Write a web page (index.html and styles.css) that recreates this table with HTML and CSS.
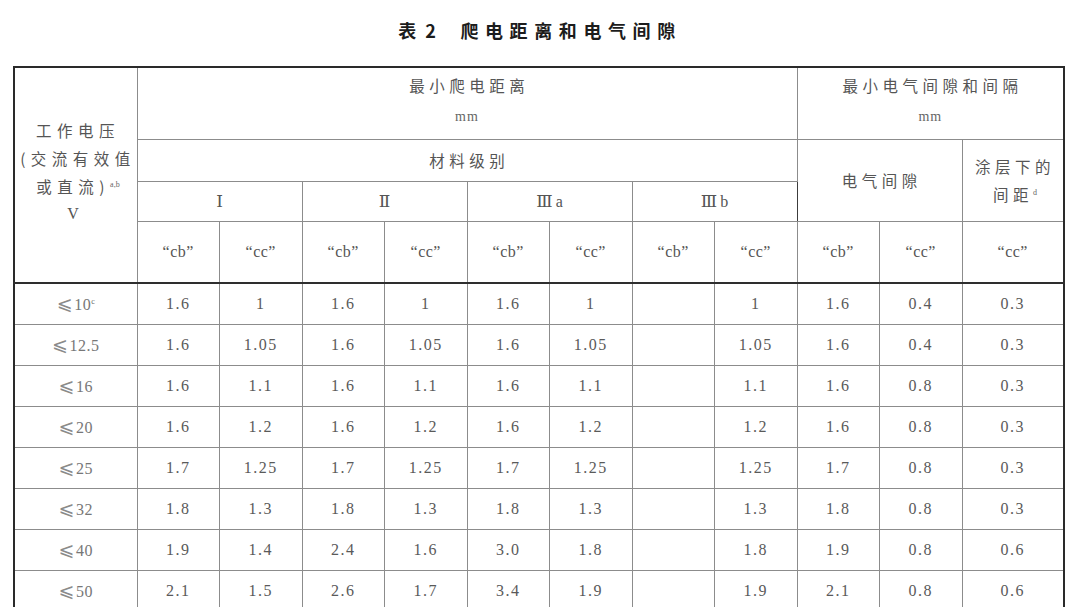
FILE: index.html
```html
<!DOCTYPE html>
<html lang="zh-CN">
<head>
<meta charset="utf-8">
<title>表 2 爬电距离和电气间隙</title>
<link rel="stylesheet" href="styles.css">
</head>
<body>
<div class="page">
  <h1 class="title"><span class="t1">表 2</span><span class="t2">爬电距离和电气间隙</span></h1>
  <table class="tbl">
    <colgroup>
      <col class="c-v">
      <col class="c-n"><col class="c-n"><col class="c-n"><col class="c-n"><col class="c-n">
      <col class="c-n"><col class="c-n"><col class="c-n"><col class="c-n"><col class="c-n">
      <col class="c-w">
    </colgroup>
    <thead>
      <tr class="r1">
        <th rowspan="4" class="volt">
          <div class="cn vl">工作电压</div>
          <div class="cn vl">(交流有效值</div>
          <div class="cn vl">或直流)<sup>a,b</sup></div>
          <div class="lat vl">V</div>
        </th>
        <th colspan="8"><div class="cn">最小爬电距离</div><div class="unit">mm</div></th>
        <th colspan="3" class="dk"><div class="cn">最小电气间隙和间隔</div><div class="unit">mm</div></th>
      </tr>
      <tr class="r2">
        <th colspan="8"><span class="cn">材料级别</span></th>
        <th colspan="2" rowspan="2" class="dk"><span class="cn">电气间隙</span></th>
        <th rowspan="2"><div class="cn">涂层下的</div><div class="cn">间距<sup>d</sup></div></th>
      </tr>
      <tr class="r3">
        <th colspan="2" class="rom">Ⅰ</th>
        <th colspan="2" class="rom">Ⅱ</th>
        <th colspan="2" class="rom">Ⅲ<span class="ab">a</span></th>
        <th colspan="2" class="rom">Ⅲ<span class="ab">b</span></th>
      </tr>
      <tr class="r4">
        <th class="q">“cb”</th><th class="q">“cc”</th>
        <th class="q">“cb”</th><th class="q">“cc”</th>
        <th class="q">“cb”</th><th class="q">“cc”</th>
        <th class="q">“cb”</th><th class="q">“cc”</th>
        <th class="q dk">“cb”</th><th class="q">“cc”</th>
        <th class="q">“cc”</th>
      </tr>
    </thead>
    <tbody>
      <tr><td class="v"><span class="le">⩽</span>10<sup>c</sup></td><td>1.6</td><td>1</td><td>1.6</td><td>1</td><td>1.6</td><td>1</td><td></td><td>1</td><td class="dk">1.6</td><td>0.4</td><td>0.3</td></tr>
      <tr><td class="v"><span class="le">⩽</span>12.5</td><td>1.6</td><td>1.05</td><td>1.6</td><td>1.05</td><td>1.6</td><td>1.05</td><td></td><td>1.05</td><td class="dk">1.6</td><td>0.4</td><td>0.3</td></tr>
      <tr><td class="v"><span class="le">⩽</span>16</td><td>1.6</td><td>1.1</td><td>1.6</td><td>1.1</td><td>1.6</td><td>1.1</td><td></td><td>1.1</td><td class="dk">1.6</td><td>0.8</td><td>0.3</td></tr>
      <tr><td class="v"><span class="le">⩽</span>20</td><td>1.6</td><td>1.2</td><td>1.6</td><td>1.2</td><td>1.6</td><td>1.2</td><td></td><td>1.2</td><td class="dk">1.6</td><td>0.8</td><td>0.3</td></tr>
      <tr><td class="v"><span class="le">⩽</span>25</td><td>1.7</td><td>1.25</td><td>1.7</td><td>1.25</td><td>1.7</td><td>1.25</td><td></td><td>1.25</td><td class="dk">1.7</td><td>0.8</td><td>0.3</td></tr>
      <tr><td class="v"><span class="le">⩽</span>32</td><td>1.8</td><td>1.3</td><td>1.8</td><td>1.3</td><td>1.8</td><td>1.3</td><td></td><td>1.3</td><td class="dk">1.8</td><td>0.8</td><td>0.3</td></tr>
      <tr><td class="v"><span class="le">⩽</span>40</td><td>1.9</td><td>1.4</td><td>2.4</td><td>1.6</td><td>3.0</td><td>1.8</td><td></td><td>1.8</td><td class="dk">1.9</td><td>0.8</td><td>0.6</td></tr>
      <tr><td class="v"><span class="le">⩽</span>50</td><td>2.1</td><td>1.5</td><td>2.6</td><td>1.7</td><td>3.4</td><td>1.9</td><td></td><td>1.9</td><td class="dk">2.1</td><td>0.8</td><td>0.6</td></tr>
    </tbody>
  </table>
</div>
</body>
</html>
```

FILE: styles.css
```css
html, body {
  margin: 0;
  padding: 0;
  background: #ffffff;
}

body {
  font-family: "Noto Sans CJK SC", "DejaVu Sans", sans-serif;
  color: #555555;
}

.page {
  padding-left: 13px;
  width: 1052px;
}

.title {
  margin: 0;
  height: 66px;
  box-sizing: border-box;
  padding-top: 18px;
  padding-left: 2px;
  display: flex;
  justify-content: center;
  align-items: flex-start;
  font-size: 18px;
  line-height: 24px;
  font-weight: 700;
  color: #1c1c1c;
}

.t1 {
  letter-spacing: 2.5px;
}

.t2 {
  margin-left: 22px;
  letter-spacing: 6.6px;
}

.tbl {
  border-collapse: collapse;
  table-layout: fixed;
  width: 1052px;
  border-top: 2px solid #2a2a2a;
  border-left: 2px solid #2a2a2a;
  border-right: 2px solid #2a2a2a;
}

.c-v { width: 123px; }
.c-n { width: 82.5px; }
.c-w { width: 102px; }

.tbl th,
.tbl td {
  border: 1px solid #8c8c8c;
  padding: 0;
  text-align: center;
  vertical-align: middle;
  font-weight: 400;
  color: #555555;
}

.tbl .dk {
  border-left: 1px solid #3c3c3c;
}

.r1 { height: 72px; }
.r2 { height: 42px; }
.r3 { height: 40px; }
.r4 { height: 62px; }

.r1 .unit {
  line-height: 36px;
}

.r4 th {
  border-bottom: 2px solid #2e2e2e;
}

.tbl .volt {
  border-bottom: 2px solid #2e2e2e;
  vertical-align: middle;
  padding-bottom: 6px;
}

.cn {
  font-size: 15.5px;
  letter-spacing: 4.5px;
  margin-right: -4.5px;
  line-height: 28px;
}

.vl {
  line-height: 28px;
  text-align: center;
  letter-spacing: 5.5px;
  white-space: nowrap;
}

.lat {
  font-family: "Liberation Serif", serif;
  font-size: 16px;
}

.unit {
  font-family: "Liberation Serif", serif;
  font-size: 14px;
  letter-spacing: 1px;
  line-height: 26px;
  color: #666666;
}

sup {
  font-family: "Liberation Serif", serif;
  font-size: 8px;
  letter-spacing: 0;
  vertical-align: 6px;
  line-height: 0;
  color: #666666;
}

.rom {
  font-family: "DejaVu Serif", "Liberation Serif", serif;
  font-size: 17px;
}

.ab {
  font-family: "Liberation Serif", serif;
  font-size: 16px;
  margin-left: 3px;
}

.q {
  font-family: "Liberation Serif", serif;
  font-size: 16px;
  letter-spacing: 0.5px;
  color: #4a4a4a;
}

.tbl td {
  height: 40px;
  font-family: "Liberation Serif", serif;
  font-size: 16px;
  letter-spacing: 1.5px;
  color: #5a5a5a;
}

.tbl td.v {
  color: #777777;
  letter-spacing: 0.5px;
}

.le {
  font-family: "DejaVu Sans", sans-serif;
  font-size: 19px;
  line-height: 16px;
  color: #8a8a8a;
  margin-right: 1px;
}
```
